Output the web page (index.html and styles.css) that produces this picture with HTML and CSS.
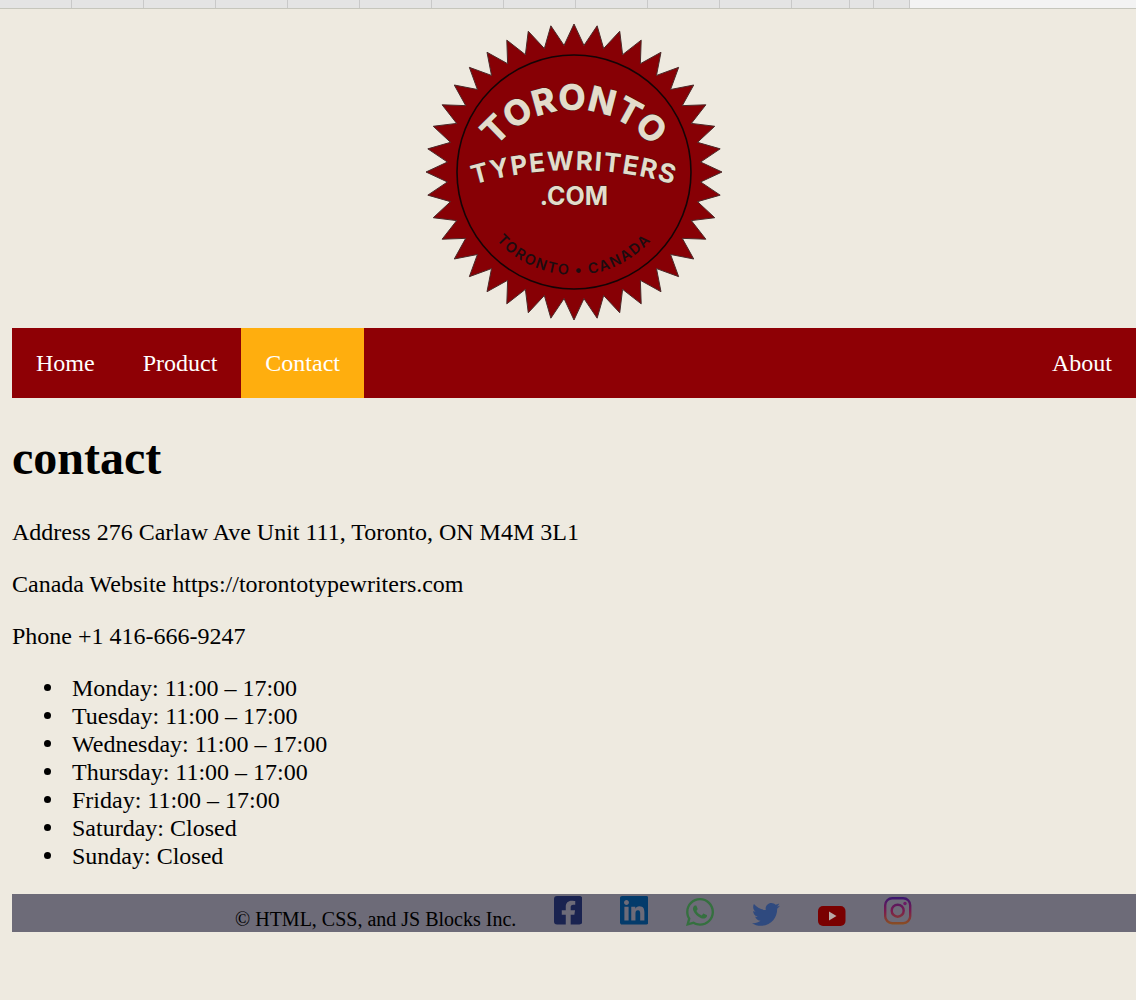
FILE: index.html
```html
<!DOCTYPE html>
<html lang="en">
<head>
    <meta charset="UTF-8">
    <meta name="viewport" content="width=device-width, initial-scale=1.0">
    <title>Contact</title>
    <link rel="stylesheet" href="styles.css">
</head>
<body>
    <div class="tabs">
        <span class="tab"></span>
        <span class="tab"></span>
        <span class="tab"></span>
        <span class="tab"></span>
        <span class="tab"></span>
        <span class="tab"></span>
        <span class="tab"></span>
        <span class="tab"></span>
        <span class="tab"></span>
        <span class="tab"></span>
        <span class="tab"></span>
        <span class="tab tab-mid"></span>
        <span class="tab tab-small"></span>
        <span class="tab tab-end"></span>
    </div>

    <div id="content">
        <header class="logo">
            <svg class="seal" width="300" height="300" viewBox="-150 -150 300 300">
                <defs>
                    <path id="arcTop" d="M -101 39 A 101 101 0 0 1 101 39"/>
                    <path id="arcMid" d="M -150 31.6 A 352 352 0 0 1 150 31.6"/>
                    <path id="arcBottom" d="M -103 0 A 103 103 0 0 0 103 0"/>
                </defs>
                <polygon class="seal-star" points="148,0 126.6,-9.96 146.18,-23.15 123.49,-29.65 140.76,-45.73 117.33,-48.6 131.87,-67.19 108.29,-66.36 119.73,-86.99 96.57,-82.48 104.65,-104.65 82.48,-96.57 86.99,-119.73 66.36,-108.29 67.19,-131.87 48.6,-117.33 45.73,-140.76 29.65,-123.49 23.15,-146.18 9.96,-126.6 0,-148 -9.96,-126.6 -23.15,-146.18 -29.65,-123.49 -45.73,-140.76 -48.6,-117.33 -67.19,-131.87 -66.36,-108.29 -86.99,-119.73 -82.48,-96.57 -104.65,-104.65 -96.57,-82.48 -119.73,-86.99 -108.29,-66.36 -131.87,-67.19 -117.33,-48.6 -140.76,-45.73 -123.49,-29.65 -146.18,-23.15 -126.6,-9.96 -148,0 -126.6,9.96 -146.18,23.15 -123.49,29.65 -140.76,45.73 -117.33,48.6 -131.87,67.19 -108.29,66.36 -119.73,86.99 -96.57,82.48 -104.65,104.65 -82.48,96.57 -86.99,119.73 -66.36,108.29 -67.19,131.87 -48.6,117.33 -45.73,140.76 -29.65,123.49 -23.15,146.18 -9.96,126.6 0,148 9.96,126.6 23.15,146.18 29.65,123.49 45.73,140.76 48.6,117.33 67.19,131.87 66.36,108.29 86.99,119.73 82.48,96.57 104.65,104.65 96.57,82.48 119.73,86.99 108.29,66.36 131.87,67.19 117.33,48.6 140.76,45.73 123.49,29.65 146.18,23.15 126.6,9.96"/>
                <circle class="seal-ring" cx="0" cy="0" r="117"/>
                <text class="seal-big"><textPath href="#arcTop" startOffset="50%">TORONTO</textPath></text>
                <text class="seal-mid"><textPath href="#arcMid" startOffset="50%">TYPEWRITERS</textPath></text>
                <text class="seal-com" x="0" y="33">.COM</text>
                <text class="seal-small"><textPath href="#arcBottom" startOffset="50%">TORONTO • CANADA</textPath></text>
            </svg>
        </header>

        <nav class="topnav">
            <a href="#">Home</a>
            <a href="#">Product</a>
            <a href="#" class="active">Contact</a>
            <a href="#" class="right">About</a>
        </nav>

        <h1>contact</h1>
        <p>Address 276 Carlaw Ave Unit 111, Toronto, ON M4M 3L1</p>
        <p>Canada Website https://torontotypewriters.com</p>
        <p>Phone +1 416-666-9247</p>
        <ul>
            <li>Monday: 11:00 – 17:00</li>
            <li>Tuesday: 11:00 – 17:00</li>
            <li>Wednesday: 11:00 – 17:00</li>
            <li>Thursday: 11:00 – 17:00</li>
            <li>Friday: 11:00 – 17:00</li>
            <li>Saturday: Closed</li>
            <li>Sunday: Closed</li>
        </ul>

        <footer class="footer">
            <span class="copy">© HTML, CSS, and JS Blocks Inc.</span>
            <div class="social">
                <svg class="icon" viewBox="0 0 28 30"><path class="ic-fb" transform="scale(.0635) translate(0 -32)" d="M400 32H48A48 48 0 0 0 0 80v352a48 48 0 0 0 48 48h137.25V327.69h-63V256h63v-54.64c0-62.15 37-96.48 93.67-96.48 27.14 0 55.52 4.84 55.52 4.84v61h-31.27c-30.81 0-40.42 19.12-40.42 38.73V256h68.78l-11 71.69h-57.78V480H400a48 48 0 0 0 48-48V80a48 48 0 0 0-48-48z"/></svg>
                <svg class="icon" viewBox="0 0 28 30"><path class="ic-in" transform="scale(.0635) translate(0 -32)" d="M416 32H31.9C14.3 32 0 46.5 0 64.3v383.4C0 465.5 14.3 480 31.9 480H416c17.6 0 32-14.5 32-32.3V64.3c0-17.8-14.4-32.3-32-32.3zM135.4 416H69V202.2h66.5V416zm-33.2-243c-21.3 0-38.5-17.3-38.5-38.5S80.9 96 102.2 96c21.2 0 38.5 17.3 38.5 38.5 0 21.3-17.2 38.5-38.5 38.5zm282.1 243h-66.4V312c0-24.8-.5-56.7-34.5-56.7-34.6 0-39.9 27-39.9 54.9V416h-66.4V202.2h63.7v29.2h.9c8.9-16.8 30.6-37.8 62.9-37.8 67.2 0 79.7 44.3 79.7 101.9V416z"/></svg>
                <svg class="icon" viewBox="0 0 28 30"><path class="ic-wa" transform="translate(0 2) scale(.0625) translate(0 -32)" d="M380.9 97.1C339 55.1 283.2 32 223.9 32c-122.4 0-222 99.6-222 222 0 39.1 10.2 77.3 29.6 111L0 480l117.7-30.9c32.4 17.7 68.9 27 106.1 27h.1c122.3 0 224.1-99.6 224.1-222 0-59.3-25.2-115-67.1-157zm-157 341.6c-33.2 0-65.7-8.9-94-25.7l-6.7-4-69.8 18.3L72 359.2l-4.4-7c-18.5-29.4-28.2-63.3-28.2-98.2 0-101.7 82.8-184.5 184.6-184.5 49.3 0 95.6 19.2 130.4 54.1 34.8 34.9 56.2 81.2 56.1 130.5 0 101.8-84.9 184.6-186.6 184.6zm101.2-138.2c-5.5-2.8-32.8-16.2-37.9-18-5.1-1.9-8.8-2.8-12.5 2.8-3.7 5.6-14.3 18-17.6 21.8-3.2 3.7-6.5 4.2-12 1.4-32.6-16.3-54-29.1-75.5-66-5.7-9.8 5.7-9.1 16.3-30.3 1.8-3.7.9-6.9-.5-9.7-1.4-2.8-12.5-30.1-17.1-41.2-4.5-10.8-9.1-9.3-12.5-9.5-3.2-.2-6.9-.2-10.6-.2-3.7 0-9.7 1.4-14.8 6.9-5.1 5.6-19.4 19-19.4 46.3 0 27.3 19.9 53.7 22.6 57.4 2.8 3.7 39.1 59.7 94.8 83.8 35.2 15.2 49 16.5 66.6 13.9 10.7-1.6 32.8-13.4 37.4-26.4 4.6-13 4.6-24.1 3.2-26.4-1.3-2.5-5-3.9-10.5-6.6z"/></svg>
                <svg class="icon" viewBox="0 0 28 30"><path class="ic-tw" transform="translate(0 7) scale(.0547) translate(0 -48)" d="M459.37 151.716c.325 4.548.325 9.097.325 13.645 0 138.72-105.583 298.558-298.558 298.558-59.452 0-114.68-17.219-161.137-47.106 8.447.974 16.568 1.299 25.34 1.299 49.055 0 94.213-16.568 130.274-44.832-46.132-.975-84.792-31.188-98.112-72.772 6.498.974 12.995 1.624 19.818 1.624 9.421 0 18.843-1.3 27.614-3.573-48.081-9.747-84.143-51.98-84.143-102.985v-1.299c13.969 7.797 30.214 12.67 47.431 13.319-28.264-18.843-46.781-51.005-46.781-87.391 0-19.492 5.197-37.36 14.294-52.954 51.655 63.675 129.3 105.258 216.365 109.807-1.624-7.797-2.599-15.918-2.599-24.04 0-57.828 46.782-104.934 104.934-104.934 30.213 0 57.502 12.67 76.67 33.137 23.715-4.548 46.456-13.32 66.599-25.34-7.798 24.366-24.366 44.833-46.132 57.827 21.117-2.273 41.584-8.122 60.426-16.243-14.292 20.791-32.161 39.308-52.628 54.253z"/></svg>
                <svg class="icon" viewBox="0 0 28 30"><rect class="ic-yt" x="0" y="10" width="27.5" height="20" rx="5"/><polygon class="ic-yt-play" points="11,15.5 11,24.5 18.5,20"/></svg>
                <svg class="icon" viewBox="0 0 28 30">
                    <defs>
                        <linearGradient id="igGrad" gradientUnits="userSpaceOnUse" x1="0" y1="1" x2="0" y2="29">
                            <stop offset="0" stop-color="#3a1670"/>
                            <stop offset=".5" stop-color="#7a1a4e"/>
                            <stop offset="1" stop-color="#8a5220"/>
                        </linearGradient>
                    </defs>
                    <rect class="ic-ig" x="1.2" y="2.2" width="25" height="25" rx="7"/>
                    <circle class="ic-ig" cx="13.7" cy="14.7" r="6"/>
                    <circle class="ic-ig-dot" cx="21" cy="7.5" r="1.7"/>
                </svg>
            </div>
        </footer>
    </div>
</body>
</html>
```

FILE: styles.css
```css
html, body {
    margin: 0;
    background: #eeeae0;
}

body {
    font-family: "Liberation Serif", "Times New Roman", serif;
    font-size: 24px;
    line-height: 28px;
    color: #000;
    overflow-x: hidden;
}

/* strip of cells cut off along the top */
.tabs {
    display: flex;
    height: 8px;
    background: #f3f3f3;
    border-bottom: 1px solid #c6c6bc;
}

.tab {
    box-sizing: border-box;
    width: 72px;
    background: #e4e4e4;
    border-right: 1px solid #c9c9c9;
}

.tab-mid {
    width: 58px;
}

.tab-small {
    width: 24px;
}

.tab-end {
    width: 36px;
}

#content {
    padding-left: 12px;
}

.logo {
    display: flex;
    justify-content: center;
    padding: 13px 0 6px;
}

.seal {
    display: block;
}

.seal-star {
    fill: #870005;
    stroke: #4a2a2a;
    stroke-width: 1;
}

.seal-ring {
    fill: none;
    stroke: #140406;
    stroke-width: 1.6;
}

.seal text {
    font-family: Inter, "Noto Sans", sans-serif;
    font-weight: 700;
    text-anchor: middle;
}

.seal-big,
.seal-mid,
.seal-com {
    fill: #e4dccb;
    stroke: #33201c;
    stroke-width: 0.8;
    paint-order: stroke;
}

.seal .seal-big {
    font-size: 35.5px;
    font-weight: 800;
}

.seal-mid {
    font-size: 26px;
    letter-spacing: 1.4px;
}

.seal-com {
    font-size: 25px;
}

.seal .seal-small {
    font-size: 14.5px;
    font-weight: 600;
    letter-spacing: 1.6px;
    fill: #1c0c10;
}

.topnav {
    display: flex;
    background: #8e0005;
}

.topnav a {
    padding: 21px 24px;
    color: #fff;
    text-decoration: none;
}

.topnav a.active {
    background: #ffae0e;
}

.topnav a.right {
    margin-left: auto;
}

h1 {
    font-size: 48px;
    line-height: 55px;
    font-weight: bold;
    margin: 32px 0 33px;
}

p {
    margin: 24px 0;
}

ul {
    margin: 24px 0;
    padding-left: 60px;
    list-style: none;
}

li {
    position: relative;
}

li::before {
    content: "";
    position: absolute;
    left: -28px;
    top: 10px;
    width: 7px;
    height: 7px;
    border-radius: 50%;
    background: #000;
}

.footer {
    display: flex;
    align-items: flex-start;
    height: 38px;
    padding-left: 223px;
    background: #6d6b78;
}

.copy {
    font-size: 20px;
    line-height: 23px;
    margin-top: 14px;
    margin-right: 38px;
}

.social {
    display: flex;
    gap: 38px;
    padding-top: 2px;
}

.icon {
    display: block;
    width: 28px;
    height: 30px;
}

.ic-fb {
    fill: #1a2350;
}

.ic-in {
    fill: #033b6b;
}

.ic-wa {
    fill: #35703f;
}

.ic-tw {
    fill: #2f4a7f;
}

.ic-yt {
    fill: #7a0000;
}

.ic-yt-play {
    fill: #b8a9a6;
}

.ic-ig {
    fill: none;
    stroke: url(#igGrad);
    stroke-width: 2.4;
}

.ic-ig-dot {
    fill: #6d1a66;
}
```
